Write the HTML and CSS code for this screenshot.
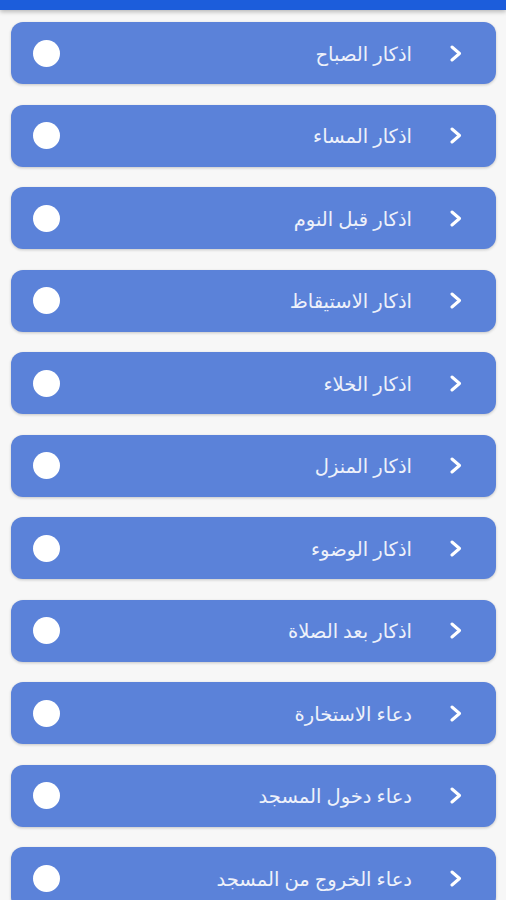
FILE: index.html
```html
<!DOCTYPE html>
<html lang="ar" dir="rtl">
<head>
<meta charset="UTF-8" />
<title>الأذكار</title>
<link rel="stylesheet" href="styles.css">
</head>
<body>
<div class="topbar"></div>
<div class="list">
  <div class="item"><span class="chev"><svg viewBox="0 0 15 17" width="15" height="17"><path d="M4 2 L11.5 8.5 L4 15" /></svg></span><span class="label">اذكار الصباح</span><span class="dot"></span></div>
  <div class="item"><span class="chev"><svg viewBox="0 0 15 17" width="15" height="17"><path d="M4 2 L11.5 8.5 L4 15" /></svg></span><span class="label">اذكار المساء</span><span class="dot"></span></div>
  <div class="item"><span class="chev"><svg viewBox="0 0 15 17" width="15" height="17"><path d="M4 2 L11.5 8.5 L4 15" /></svg></span><span class="label">اذكار قبل النوم</span><span class="dot"></span></div>
  <div class="item"><span class="chev"><svg viewBox="0 0 15 17" width="15" height="17"><path d="M4 2 L11.5 8.5 L4 15" /></svg></span><span class="label">اذكار الاستيقاظ</span><span class="dot"></span></div>
  <div class="item"><span class="chev"><svg viewBox="0 0 15 17" width="15" height="17"><path d="M4 2 L11.5 8.5 L4 15" /></svg></span><span class="label">اذكار الخلاء</span><span class="dot"></span></div>
  <div class="item"><span class="chev"><svg viewBox="0 0 15 17" width="15" height="17"><path d="M4 2 L11.5 8.5 L4 15" /></svg></span><span class="label">اذكار المنزل</span><span class="dot"></span></div>
  <div class="item"><span class="chev"><svg viewBox="0 0 15 17" width="15" height="17"><path d="M4 2 L11.5 8.5 L4 15" /></svg></span><span class="label">اذكار الوضوء</span><span class="dot"></span></div>
  <div class="item"><span class="chev"><svg viewBox="0 0 15 17" width="15" height="17"><path d="M4 2 L11.5 8.5 L4 15" /></svg></span><span class="label">اذكار بعد الصلاة</span><span class="dot"></span></div>
  <div class="item"><span class="chev"><svg viewBox="0 0 15 17" width="15" height="17"><path d="M4 2 L11.5 8.5 L4 15" /></svg></span><span class="label">دعاء الاستخارة</span><span class="dot"></span></div>
  <div class="item"><span class="chev"><svg viewBox="0 0 15 17" width="15" height="17"><path d="M4 2 L11.5 8.5 L4 15" /></svg></span><span class="label">دعاء دخول المسجد</span><span class="dot"></span></div>
  <div class="item"><span class="chev"><svg viewBox="0 0 15 17" width="15" height="17"><path d="M4 2 L11.5 8.5 L4 15" /></svg></span><span class="label">دعاء الخروج من المسجد</span><span class="dot"></span></div>
</div>
</body>
</html>
```
FILE: styles.css
```css
body { margin: 0; background: #f7f7f7; font-family: "Noto Sans", "DejaVu Sans", sans-serif; overflow: hidden; }
.topbar { height: 10px; background: #1c5ddb; box-shadow: 0 2px 4px rgba(0,0,0,0.25); }
.list { display: flex; flex-direction: column; gap: 20.5px; padding: 12px 10px 0 11px; }
.item { display: flex; align-items: center; height: 62px; flex-shrink: 0; background: #5b82d9; border-radius: 12px; box-shadow: 0 1px 3px rgba(0,0,0,0.2); padding: 0 33px 0 22px; color: #eef1fa; }
.chev { display: flex; width: 15px; }
.chev path { fill: none; stroke: #fff; stroke-width: 3; stroke-linecap: round; stroke-linejoin: round; }
.label { margin-right: 36px; font-size: 19.5px; flex: 1; }
.dot { width: 27px; height: 27px; border-radius: 50%; background: #fff; }
```
